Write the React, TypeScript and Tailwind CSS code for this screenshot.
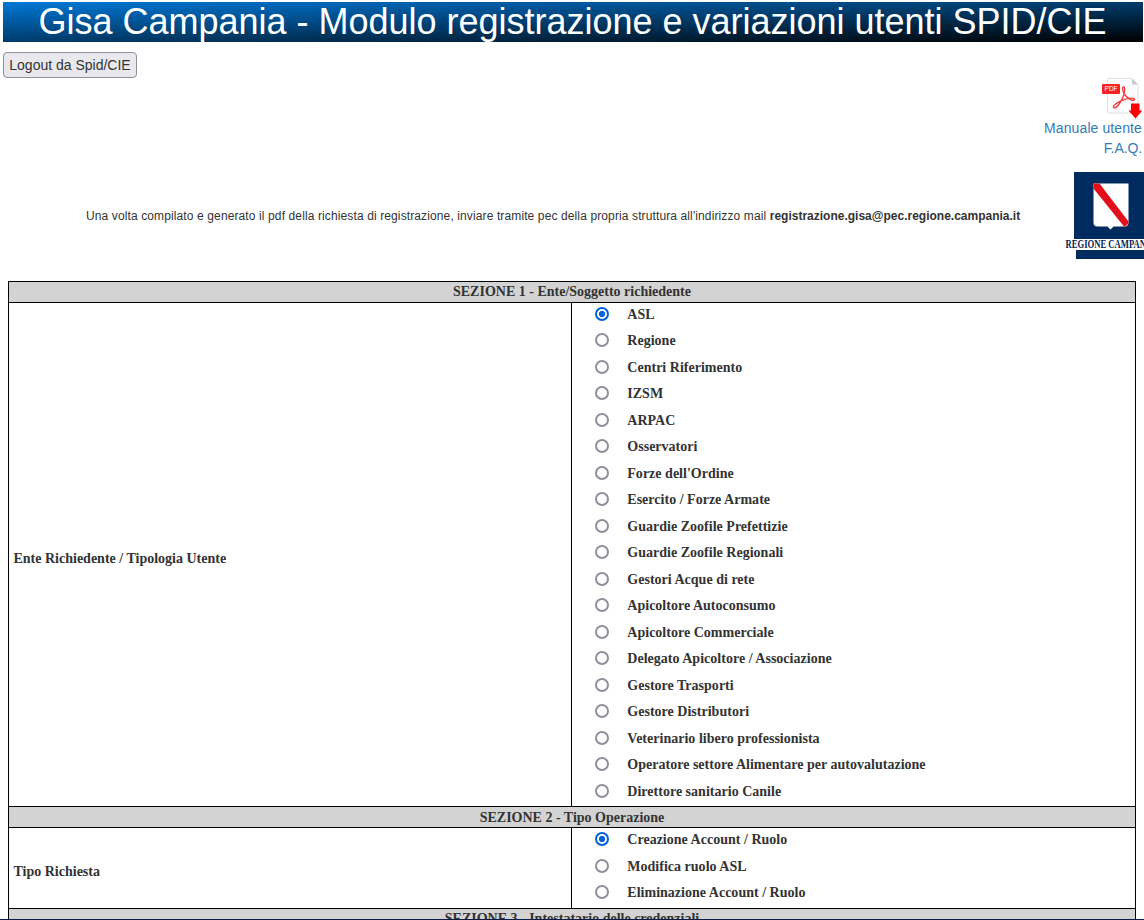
const enti = [
  'ASL',
  'Regione',
  'Centri Riferimento',
  'IZSM',
  'ARPAC',
  'Osservatori',
  "Forze dell'Ordine",
  'Esercito / Forze Armate',
  'Guardie Zoofile Prefettizie',
  'Guardie Zoofile Regionali',
  'Gestori Acque di rete',
  'Apicoltore Autoconsumo',
  'Apicoltore Commerciale',
  'Delegato Apicoltore / Associazione',
  'Gestore Trasporti',
  'Gestore Distributori',
  'Veterinario libero professionista',
  'Operatore settore Alimentare per autovalutazione',
  'Direttore sanitario Canile',
];

const operazioni = ['Creazione Account / Ruolo', 'Modifica ruolo ASL', 'Eliminazione Account / Ruolo'];

function RadioList({ name, options, rows }: { name: string; options: string[]; rows: string }) {
  return (
    <div className={`flex-1 ${rows}`}>
      {options.map((label, i) => (
        <label key={label} className="flex items-start pl-[23px]">
          <input
            type="radio"
            name={name}
            defaultChecked={i === 0}
            className="mt-1 size-3.5 shrink-0 appearance-none rounded-full border-2 border-[#8f8f9d] bg-white checked:border-[#0060df] checked:bg-[radial-gradient(circle,#0060df_2.8px,#fff_3.4px)]"
          />
          <span className="ml-[18.3px] pt-[2px] leading-5 tracking-[0.015px]">{label}</span>
        </label>
      ))}
    </div>
  );
}

function SectionTitle({ children, leading = 'leading-5' }: { children: string; leading?: string }) {
  return (
    <div className={`h-[21px] shrink-0 border-b border-black bg-[#d3d3d3] text-center ${leading}`}>{children}</div>
  );
}

function PdfIcon() {
  return (
    <svg width="41" height="41" viewBox="0 0 41 41" fill="none">
      <path d="M6.500 1.500a1 1 0 0 1 1-1H31l6 6V34a1 1 0 0 1-1 1H7.500a1 1 0 0 1-1-1Z" fill="#fdfdfe" stroke="#dde0e4" />
      <path d="M31 .500 37 6.500h-5a1 1 0 0 1-1-1Z" fill="#c6ccd2" />
      <rect x="1" y="6" width="18" height="10" rx="1" fill="#f52323" />
      <text x="3.600" y="13.300" fontFamily="Liberation Sans" fontSize="6.500" fill="#fff" textLength="13">
        PDF
      </text>
      <path
        d="M12.500 29.500c-.8-2.500 6-6.500 12-8.300 5-1.400 9-1.300 9 .3 0 2-6 .3-9.500-4.500-2.500-3.500-3.200-7.800-1.600-8.200 1.800-.4 1.600 4.500.1 8.700-2 6-7 14-10 12Z"
        stroke="#f3393d"
        strokeWidth="1.300"
      />
      <path d="M30 25.500h8.500v7h3L34.500 40.500 27.500 32.500H30Z" fill="#fe0000" />
    </svg>
  );
}

function RegioneLogo() {
  return (
    <svg width="79" height="87" viewBox="0 0 79 87">
      <rect x="9" width="70" height="67" fill="#002b5f" />
      <rect x="11" y="78" width="68" height="9" fill="#002b5f" />
      <path d="M28.500 11.500h35v39q0 4-4 4h-11l-3 3-3-3h-10q-4 0-4-4Z" fill="#fff" />
      <path d="M28.500 11.500h6L63.500 49.500q0 4-4.500 5L28.500 16.500Z" fill="#e3101c" />
      <text
        x="0.500"
        y="76.300"
        fontFamily="Liberation Serif"
        fontSize="11.500"
        fontWeight="bold"
        fill="#061f55"
        textLength="90"
        lengthAdjust="spacingAndGlyphs"
      >
        REGIONE CAMPANIA
      </text>
    </svg>
  );
}

export default function App() {
  return (
    <div className="h-[920px] w-[1144px] overflow-hidden bg-white font-['Liberation_Sans',sans-serif] text-[#333]">
      <div className="flex h-[919px] flex-col overflow-hidden pt-[2px]">
        <h1 className="mr-px ml-[3px] h-10 shrink-0 overflow-hidden bg-[linear-gradient(to_bottom_right,#0078d7,#000)] pr-px text-center text-[36px] leading-10 tracking-[-0.01px] whitespace-nowrap text-white">
          Gisa Campania - Modulo registrazione e variazioni utenti SPID/CIE
        </h1>
        <button className="mt-[10px] ml-[3px] h-[26px] w-[134px] shrink-0 rounded-[4px] border border-[#8f8f9d] bg-[#e9e9ed] text-sm leading-6 whitespace-nowrap">
          Logout da Spid/CIE
        </button>
        <div className="flex h-[80px] shrink-0 flex-col items-end pr-[2px] text-sm leading-5 text-[#337ab7]">
          <div className="h-10">
            <PdfIcon />
          </div>
          <a className="tracking-[0.1px]">Manuale utente</a>
          <a className="tracking-[-0.1px]">F.A.Q.</a>
        </div>
        <div className="mt-[14px] flex h-[87px] shrink-0 items-center justify-between pl-[86px]">
          <p className="text-xs tracking-[0.117px] whitespace-nowrap">
            Una volta compilato e generato il pdf della richiesta di registrazione, inviare tramite pec della propria
            struttura all'indirizzo mail{' '}
            <b className="tracking-normal">registrazione.gisa@pec.regione.campania.it</b>
          </p>
          <RegioneLogo />
        </div>
        <div className="mx-2 mt-[22px] flex h-[660px] shrink-0 flex-col border border-black font-['Liberation_Serif',serif] text-sm font-bold">
          <SectionTitle>SEZIONE 1 - Ente/Soggetto richiedente</SectionTitle>
          <div className="flex h-[504px] shrink-0 border-b border-black">
            <div className="flex w-[563px] items-center border-r border-black pt-2 pl-[4.5px]">
              Ente Richiedente / Tipologia Utente
            </div>
            <RadioList name="ente" options={enti} rows="*:h-[27px] *:odd:h-[26px]" />
          </div>
          <SectionTitle leading="leading-[22px]">SEZIONE 2 - Tipo Operazione</SectionTitle>
          <div className="flex h-[81px] shrink-0 border-b border-black">
            <div className="flex w-[563px] items-center border-r border-black pt-2 pl-[4.5px]">Tipo Richiesta</div>
            <RadioList name="operazione" options={operazioni} rows="*:h-[26px] *:odd:h-[27px]" />
          </div>
          <SectionTitle>SEZIONE 3 - Intestatario delle credenziali</SectionTitle>
        </div>
      </div>
      <div className="h-px bg-[#101c48]" />
    </div>
  );
}
